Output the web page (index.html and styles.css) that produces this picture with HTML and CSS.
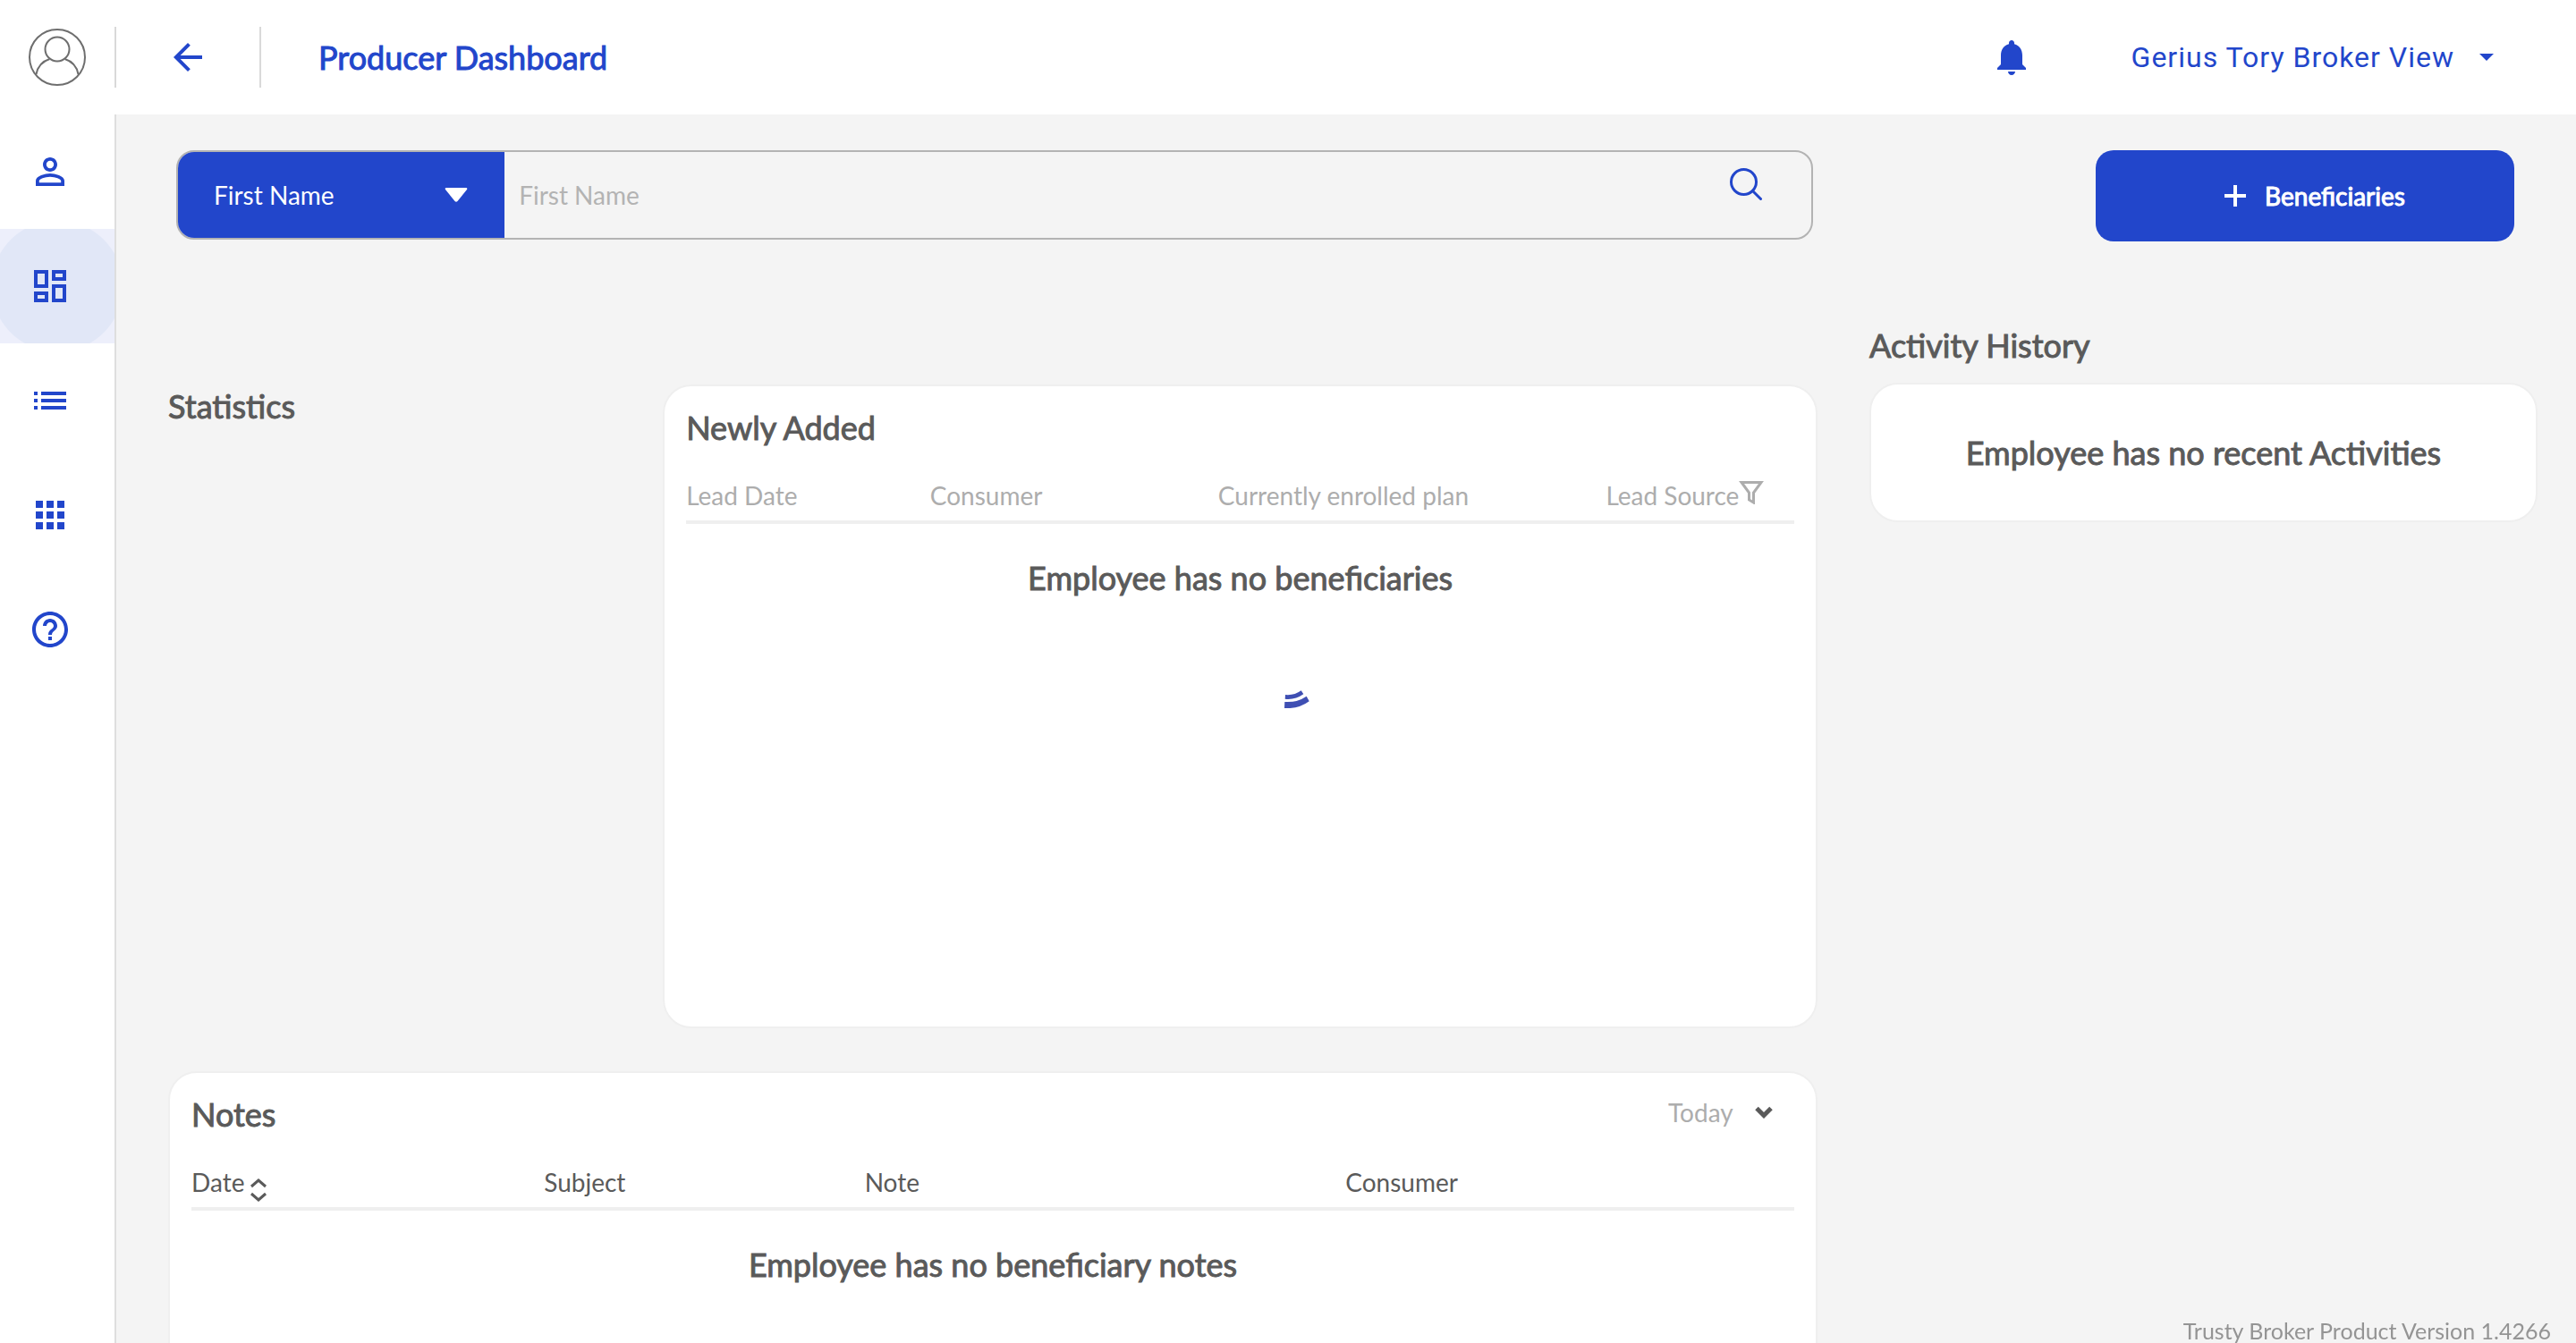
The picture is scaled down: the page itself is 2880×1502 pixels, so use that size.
FILE: index.html
```html
<!DOCTYPE html>
<html lang="en">
<head>
<meta charset="utf-8">
<meta name="viewport" content="width=device-width, initial-scale=1">
<title>Producer Dashboard</title>
<link rel="stylesheet" href="styles.css">
</head>
<body>
<div class="shell">
  <header class="topbar">
    <a class="avatar" href="#profile" aria-label="Profile">
      <svg viewBox="0 0 64 64" width="64" height="64" fill="none" stroke="#6e6e6e" stroke-width="2"><circle cx="32" cy="32" r="31"/><circle cx="32" cy="23" r="13.500"/><path d="M8.500 51c1.500-8 7-14.500 15-17M55.500 51c-1.500-8-7-14.500-15-17"/></svg>
    </a>
    <div class="back-cell">
      <button class="icon-button" type="button" aria-label="Back">
        <svg viewBox="0 0 24 24" width="48" height="48" fill="currentColor"><path d="M20 11H7.830l5.590-5.590L12 4l-8 8 8 8 1.410-1.410L7.830 13H20v-2z"/></svg>
      </button>
    </div>
    <h1 class="page-title">Producer Dashboard</h1>
    <button class="icon-button bell" type="button" aria-label="Notifications">
      <svg viewBox="0 0 24 24" width="48" height="48" fill="currentColor"><path d="M12 22c1.100 0 2-.9 2-2h-4c0 1.100.890 2 2 2zm6-6v-5c0-3.070-1.640-5.640-4.500-6.320V4c0-.83-.67-1.500-1.500-1.500s-1.500.67-1.500 1.500v.68C7.630 5.360 6 7.920 6 11v5l-2 2v1h16v-1l-2-2z"/></svg>
    </button>
    <button class="user-menu" type="button">
      <span>Gerius Tory Broker View</span>
      <svg viewBox="0 0 16 8" width="16" height="8" fill="currentColor"><path d="M0 0h16L8 8z"/></svg>
    </button>
  </header>

  <nav class="sidebar" aria-label="Main">
    <a class="nav-item" href="#people" aria-label="People"><svg viewBox="0 0 24 24" width="48" height="48" fill="currentColor"><path d="M12 5.900a2.100 2.100 0 1 1 0 4.200 2.100 2.100 0 0 1 0-4.200m0 9c2.970 0 6.100 1.460 6.100 2.100v1.100H5.900V17c0-.64 3.130-2.100 6.100-2.100M12 4C9.790 4 8 5.790 8 8s1.790 4 4 4 4-1.790 4-4-1.790-4-4-4zm0 9c-2.670 0-8 1.340-8 4v3h16v-3c0-2.660-5.330-4-8-4z"/></svg></a>
    <a class="nav-item active" href="#dashboard" aria-label="Dashboard" aria-current="page"><svg viewBox="0 0 24 24" width="48" height="48" fill="currentColor"><path d="M19 5v2h-4V5h4M9 5v6H5V5h4m10 8v6h-4v-6h4M9 17v2H5v-2h4M21 3h-8v6h8V3zM11 3H3v10h8V3zm10 8h-8v10h8V11zm-10 4H3v6h8v-6z"/></svg></a>
    <a class="nav-item" href="#list" aria-label="List"><svg viewBox="0 0 24 24" width="48" height="48" fill="currentColor"><path d="M3 13h2v-2H3v2zm0 4h2v-2H3v2zm0-8h2V7H3v2zm4 4h14v-2H7v2zm0 4h14v-2H7v2zM7 7v2h14V7H7z"/></svg></a>
    <a class="nav-item" href="#apps" aria-label="Apps"><svg viewBox="0 0 24 24" width="48" height="48" fill="currentColor"><path d="M4 8h4V4H4v4zm6 12h4v-4h-4v4zm-6 0h4v-4H4v4zm0-6h4v-4H4v4zm6 0h4v-4h-4v4zm6-10v4h4V4h-4zm-6 4h4V4h-4v4zm6 6h4v-4h-4v4zm0 6h4v-4h-4v4z"/></svg></a>
    <a class="nav-item" href="#help" aria-label="Help"><svg viewBox="0 0 24 24" width="48" height="48" fill="currentColor"><path d="M11 18h2v-2h-2v2zm1-16C6.480 2 2 6.480 2 12s4.480 10 10 10 10-4.480 10-10S17.520 2 12 2zm0 18c-4.410 0-8-3.590-8-8s3.590-8 8-8 8 3.590 8 8-3.590 8-8 8zm0-14c-2.210 0-4 1.790-4 4h2c0-1.100.9-2 2-2s2 .9 2 2c0 2-3 1.750-3 5h2c0-2.250 3-2.500 3-5 0-2.210-1.790-4-4-4z"/></svg></a>
  </nav>

  <main class="content">
    <div class="primary">
      <form class="search">
        <div class="search-field">
          <select class="search-select" aria-label="Search by"><option>First Name</option><option>Last Name</option></select>
          <svg class="search-caret" viewBox="0 0 26 16" width="26" height="16" fill="#fff"><path d="M2 0h22q2 0 1 2L14.500 15q-1.500 1.500-3 0L1 2Q0 0 2 0z"/></svg>
        </div>
        <input class="search-input" type="text" placeholder="First Name" aria-label="First Name">
        <button class="icon-button search-button" type="button" aria-label="Search">
          <svg viewBox="0 0 36 36" width="36" height="36" fill="none" stroke="currentColor" stroke-width="3"><circle cx="15.500" cy="15.500" r="14"/><path d="M25.500 25.500l9 9" stroke-linecap="round"/></svg>
        </button>
      </form>

      <div class="overview">
        <section class="statistics"><h2 class="heading">Statistics</h2></section>
        <section class="card newly">
          <h2 class="heading">Newly Added</h2>
          <table class="data leads">
            <thead><tr><th class="w22">Lead Date</th><th class="w26">Consumer</th><th class="w35">Currently enrolled plan</th>
              <th class="w17"><span class="with-icon">Lead Source<svg class="funnel" viewBox="0 0 28 26" width="28" height="26" fill="none" stroke="currentColor" stroke-width="3"><path d="M3 1.500h22L16.500 13v11l-5-3v-8z"/></svg></span></th></tr></thead>
            <tbody><tr><td class="empty" colspan="4">Employee has no beneficiaries</td></tr></tbody>
          </table>
          <svg class="spinner" viewBox="0 0 28 20" width="28" height="20" fill="#3f4fb3"><path d="M1 5Q11 6 18.700 .3L21.300 4.300Q12 11 .7 9.700z"/><path d="M.3 13Q14 14 24.700 6.700L27.700 12.300Q16 21 0 20z"/></svg>
        </section>
      </div>

      <section class="card notes">
        <div class="notes-head">
          <h2 class="heading">Notes</h2>
          <div class="period">
            <select class="period-select" aria-label="Period"><option>Today</option><option>Week</option></select>
            <svg viewBox="0 0 20 14" width="20" height="14" fill="none" stroke="#5a5a5a" stroke-width="5"><path d="M2 2.500l8 8 8-8"/></svg>
          </div>
        </div>
        <table class="data dark">
          <thead><tr><th class="w22"><span class="with-icon">Date<svg class="sorter" viewBox="0 0 20 26" width="20" height="26" fill="none" stroke="currentColor" stroke-width="3"><path d="M2 9l8-7 8 7M2 17l8 7 8-7"/></svg></span></th><th class="w20">Subject</th><th class="w30">Note</th><th class="w28">Consumer</th></tr></thead>
          <tbody><tr><td class="empty" colspan="4">Employee has no beneficiary notes</td></tr></tbody>
        </table>
      </section>
    </div>

    <aside class="secondary">
      <button class="add-button" type="button">
        <svg viewBox="0 0 24 24" width="24" height="24" fill="none" stroke="currentColor" stroke-width="4"><path d="M12 0v24M0 12h24"/></svg>
        Beneficiaries
      </button>
      <h2 class="heading">Activity History</h2>
      <section class="card activity"><p class="empty">Employee has no recent Activities</p></section>
    </aside>
  </main>
</div>
<footer class="version">Trusty Broker Product Version 1.4266</footer>
</body>
</html>
```
FILE: styles.css
```css
:root {
  --blue: #2246cb;
  --grey: #5a5a5a;
  --muted: #adadad;
}
* { box-sizing: border-box; }
body {
  margin: 0;
  background: #f4f4f4;
  color: var(--grey);
  font-family: Lato, sans-serif;
  font-size: 28px;
  line-height: 36px;
}
h1, h2, p { margin: 0; }
svg { display: block; flex: none; }
button, select, input {
  margin: 0;
  padding: 0;
  border: 0;
  background: none;
  color: inherit;
  font: inherit;
  appearance: none;
  outline: 0;
}
.shell {
  display: grid;
  grid-template-columns: 130px 1fr;
  grid-template-rows: 128px 1fr;
  height: 100vh;
}
.topbar {
  grid-column: 1 / -1;
  display: flex;
  align-items: center;
  padding-right: 92px;
  background: #fff;
  color: var(--blue);
}
.avatar {
  display: flex;
  align-items: center;
  width: 130px;
  height: 68px;
  padding-left: 32px;
  border-right: 2px solid #d9d9d9;
}
.back-cell {
  display: flex;
  align-items: center;
  width: 162px;
  height: 68px;
  padding-left: 56px;
  border-right: 2px solid #d9d9d9;
}
.page-title, .heading, .empty, .add-button {
  font-weight: 400;
  -webkit-text-stroke: 1px currentColor;
}
.page-title, .heading, .empty {
  font-size: 36px;
  line-height: 48px;
}
.page-title {
  flex: 1;
  padding-left: 64px;
}
.icon-button { display: block; color: var(--blue); }
.user-menu {
  display: flex;
  align-items: center;
  gap: 28px;
  margin-left: 110px;
  font-family: Roboto, sans-serif;
  font-size: 32px;
  letter-spacing: 1px;
}
.sidebar { background: #fff; border-right: 2px solid #dedede; }
.nav-item {
  display: flex;
  align-items: center;
  height: 128px;
  padding-left: 32px;
  color: var(--blue);
}
.nav-item.active { background: radial-gradient(circle at center, #e1e7f7 73px, #edeffb 74px); }
.content {
  display: grid;
  grid-template-columns: 1844fr 747fr;
  align-items: start;
  gap: 58px;
  padding: 40px 43px 0 58px;
  overflow-y: auto;
  scrollbar-width: none;
}
.search {
  display: flex;
  height: 100px;
  margin: 0 5px 0 9px;
  border: 2px solid #b3b3b3;
  border-radius: 20px;
  overflow: hidden;
}
.search-field { display: grid; align-items: center; width: 20%; background: var(--blue); color: #fff; }
.search-select, .search-caret { grid-area: 1 / 1; }
.search-select { width: 100%; height: 100%; padding-left: 40px; }
.search-caret { justify-self: end; margin-right: 41px; pointer-events: none; }
.search-input { flex: 1; padding-left: 16px; }
.search-input::placeholder { color: #b3b3b3; opacity: 1; }
.search-button { align-self: start; margin: 18px 55px 0 0; }
.overview { display: flex; margin-top: 162px; }
.statistics { width: 30%; }
.card { border: 2px solid #efefef; border-radius: 32px; background: #fff; }
.newly { width: 70%; height: 720px; padding: 22px 24px; }
.data { width: 100%; border-collapse: collapse; table-layout: fixed; color: var(--muted); }
.data.dark { color: var(--grey); }
.data th { padding: 34px 0 10px; border-bottom: 4px solid #efefef; font-weight: 400; text-align: left; vertical-align: middle; white-space: nowrap; }
.data td { padding: 36px 0 0; }
.w17 { width: 17%; }
.w20 { width: 20%; }
.w22 { width: 22%; }
.w26 { width: 26%; }
.w28 { width: 28%; }
.w30 { width: 30%; }
.w35 { width: 35%; }
.with-icon { display: flex; height: 36px; }
.funnel { margin-top: 2px; }
.sorter { margin: 14px 0 0 6px; }
.empty { color: var(--grey); text-align: center; }
.spinner { margin: 102px 0 0 54%; }
.notes { min-height: 720px; margin-top: 48px; padding: 22px 24px; }
.notes-head { display: flex; justify-content: space-between; }
.period { display: flex; align-items: center; gap: 24px; height: 44px; padding-right: 24px; color: var(--muted); }
.add-button {
  display: flex;
  align-items: center;
  justify-content: center;
  gap: 21px;
  width: 468px;
  height: 102px;
  margin: 0 26px 92px auto;
  padding-left: 22px;
  border-radius: 20px;
  background: var(--blue);
  color: #fff;
}
.activity { margin-top: 18px; padding: 52px 22px; }
.version {
  position: fixed;
  right: 28px;
  bottom: 0;
  color: #949494;
  font-size: 25px;
  line-height: 28px;
}
```
